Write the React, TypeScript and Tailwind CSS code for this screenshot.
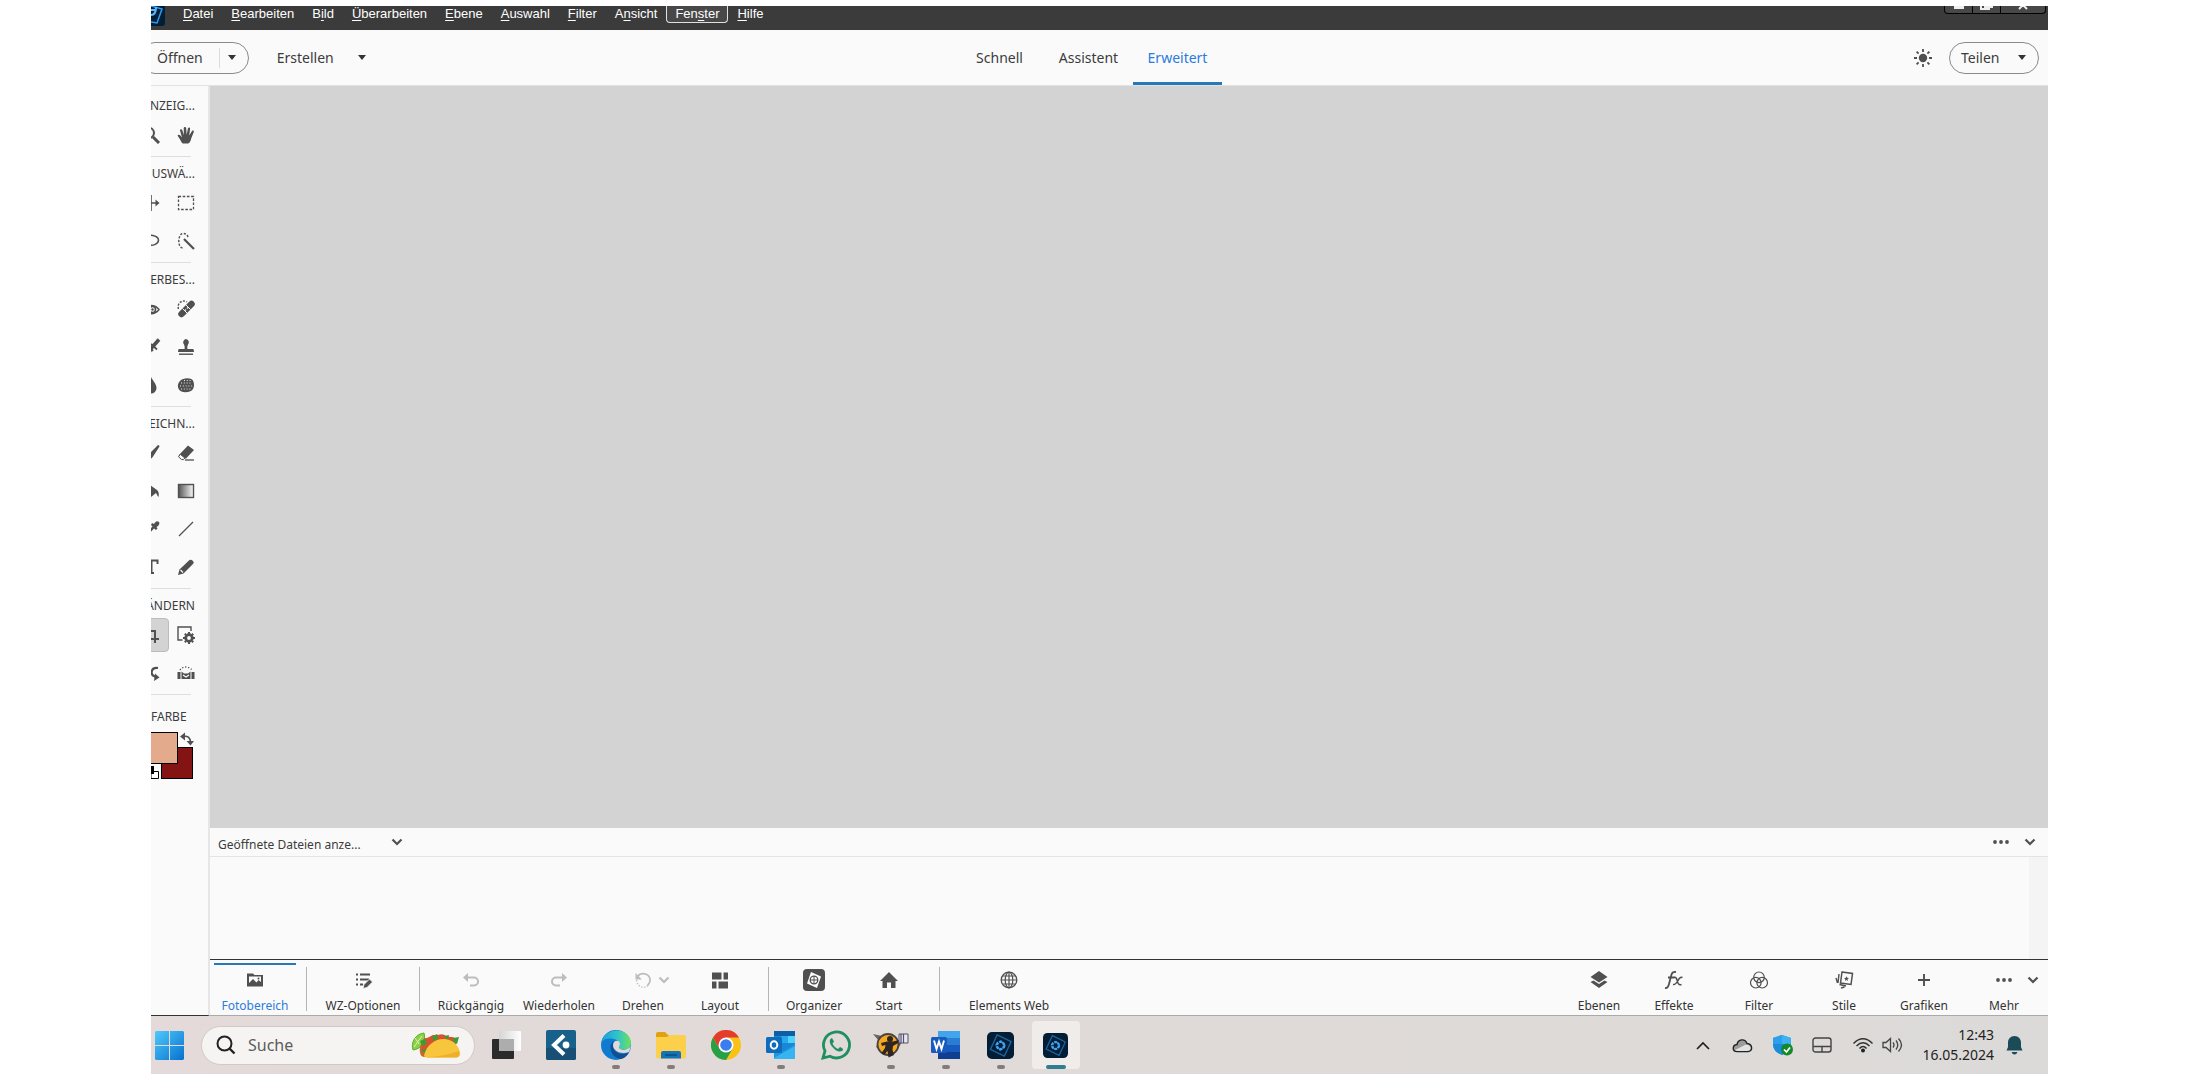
import React from "react";

type Kids = { children: React.ReactNode };

function Icon({ w = 20, h = 20, children }: Kids & { w?: number; h?: number }) {
  return (
    <svg width={w} height={h} viewBox={`0 0 ${w} ${h}`} fill="none" aria-hidden="true" className="block shrink-0">
      {children}
    </svg>
  );
}

const INK = "#505050";

/* ---------- menu bar ---------- */

const menus: [string, string, string][] = [
  ["", "D", "atei"],
  ["", "B", "earbeiten"],
  ["B", "i", "ld"],
  ["", "Ü", "berarbeiten"],
  ["", "E", "bene"],
  ["", "A", "uswahl"],
  ["", "F", "ilter"],
  ["A", "n", "sicht"],
  ["Fen", "s", "ter"],
  ["", "H", "ilfe"],
];

function MenuBar() {
  return (
    <header className="flex h-6 shrink-0 items-start justify-between overflow-hidden bg-[#3b3b3b] pr-0.5">
      <div className="flex items-start">
        <Icon w={14} h={20}>
          <path d="M0 0H14V17Q14 20 11 20H0Z" fill="#021e36" />
          <path d="M0 0L11 3L6 17L0 16" stroke="#2e9bf0" strokeWidth="1.5" />
          <path d="M0 9Q5 9 5 1M0 4H5" stroke="#5bb8ff" strokeWidth="2" />
        </Icon>
        <nav className="ml-[9px] flex">
          {menus.map(([a, u, b]) => (
            <button
              key={a + u + b}
              className={
                a === "Fen"
                  ? "h-[17px] rounded-b-sm border border-t-0 border-[#e0e0e0] bg-[#484848] px-2 text-[13px] leading-4 text-white"
                  : "h-[17px] border border-t-0 border-transparent px-2 text-[13px] leading-4 text-white"
              }
            >
              {a}
              <span className="underline underline-offset-2">{u}</span>
              {b}
            </button>
          ))}
        </nav>
      </div>
      <div className="flex h-2 overflow-hidden rounded-b-sm border border-t-0 border-black bg-[#484848]">
        <button aria-label="Minimieren" className="flex w-7 justify-center border-r border-black">
          <Icon w={10} h={4}><path d="M0 0H10V3H0Z" fill="#eee" /></Icon>
        </button>
        <button aria-label="Wiederherstellen" className="flex w-7 justify-center border-r border-black">
          <Icon w={14} h={5}><path d="M1 0V3H9V0M5 0V1H12V0" stroke="#eee" strokeWidth="2" /></Icon>
        </button>
        <button aria-label="Schließen" className="flex w-11 justify-center">
          <Icon w={12} h={4}><path d="M2 3L5 0H7L10 3" stroke="#eee" strokeWidth="2" /></Icon>
        </button>
      </div>
    </header>
  );
}

/* ---------- mode bar ---------- */

function Caret() {
  return <Icon w={8} h={5}><path d="M0 0H8L4 5Z" fill="#333" /></Icon>;
}

function ModeBar() {
  return (
    <div className="grid h-14 shrink-0 grid-cols-[1fr_auto_1fr] overflow-hidden border-b border-[#e2e2e2] bg-[#fafafa] text-[14px] text-[#3c3c3c]">
      <div className="flex items-center">
        <div className="-ml-3 flex h-8 items-center rounded-full border border-[#8a8a8a] pl-[17px] pr-3">
          <button className="pr-4">Öffnen</button>
          <button aria-label="Öffnen Optionen" className="flex h-5 items-center border-l border-[#dcdcdc] pl-2"><Caret /></button>
        </div>
        <button className="ml-7 flex items-center gap-6">
          Erstellen
          <Caret />
        </button>
      </div>
      <div className="mr-[22px] flex">
        <button className="w-[89px]">Schnell</button>
        <button className="w-[89px]">Assistent</button>
        <button className="w-[89px] border-b-3 border-[#2878b8] pt-[3px] text-[#2c7be0]">Erweitert</button>
      </div>
      <div className="flex items-center justify-end pr-[9px]">
        <button aria-label="Helligkeit" className="mr-4">
          <Icon>
            <circle cx="10" cy="10" r="4.2" fill={INK} />
            <path d="M10 1V4M10 16V19M1 10H4M16 10H19M3.6 3.6L5.6 5.6M14.4 14.4L16.4 16.4M16.4 3.6L14.4 5.6M5.6 14.4L3.6 16.4" stroke={INK} strokeWidth="1.8" />
          </Icon>
        </button>
        <button className="flex h-8 w-[90px] items-center justify-between rounded-full border border-[#8a8a8a] pl-[11px] pr-3">
          Teilen
          <Caret />
        </button>
      </div>
    </div>
  );
}

/* ---------- tool column ---------- */

const tools: Record<string, React.ReactNode> = {
  Zoom: <><circle cx="6" cy="7" r="5" stroke={INK} strokeWidth="2" /><path d="M10 11L16 17" stroke={INK} strokeWidth="3" /></>,
  Hand: <path d="M5 17C3.500 14 2 12 0.500 9.500C1 8.300 2.800 8.500 3.800 10L5 11.500L3 4.500C3 3 4.900 2.900 5.400 4.400L6.900 9L6.700 2C7 0.500 9 0.500 9.200 2L9.600 8.800L11 2.300C11.500 1 13.200 1.300 13.100 2.800L12.200 9.500L15 5C15.800 4 17.300 4.800 16.800 6L14.200 12.500C13.700 15 12.700 17 11.200 17.500H6Z" fill={INK} />,
  Verschieben: <><path d="M8 1V17M1 9H15" stroke={INK} strokeWidth="1.600" /><path d="M12.500 5.500L16.500 9L12.500 12.500Z" fill={INK} /></>,
  Auswahlrechteck: <rect x="1.500" y="2.500" width="15" height="13" stroke={INK} strokeWidth="1.300" strokeDasharray="2.600 1.600" />,
  Lasso: <path d="M2 5C5 2 15 3 15.500 8C15.500 12 10 14 6 13" stroke={INK} strokeWidth="1.500" />,
  Schnellauswahl: <><path d="M5.500 16C0 15 1 1.500 6 1.500C10 1.500 11 4 11 6" stroke={INK} strokeWidth="1.400" strokeDasharray="2.200 1.500" /><path d="M7 7L17 17" stroke={INK} strokeWidth="2.200" /></>,
  Auge: <><path d="M0 9.500C4 4 12 4 16 9.500C12 15 4 15 0 9.500Z" stroke={INK} strokeWidth="1.500" /><circle cx="9.500" cy="9.500" r="3" stroke={INK} strokeWidth="1.600" /><circle cx="9.500" cy="9.500" r="1.200" fill={INK} /></>,
  Reparatur: <><path d="M1.500 9C-0.500 3 6-1 10 2" stroke={INK} strokeWidth="1.400" strokeDasharray="2 1.400" /><path d="M4.500 14L14.500 4" stroke={INK} strokeWidth="6.500" strokeLinecap="round" /><path d="M5.500 8.500L10 13M9 5L13.500 9.500" stroke="#fafafa" strokeWidth="1" /><circle cx="8.500" cy="10" r=".8" fill="#fafafa" /><circle cx="10.500" cy="8" r=".8" fill="#fafafa" /></>,
  Smartpinsel: <><path d="M16 1.500L8.500 10L5 16" stroke={INK} strokeWidth="3.600" /><path d="M8 6L14 11.500M10 13L6 8" stroke={INK} strokeWidth="1.800" /></>,
  Stempel: <><path d="M9 1A3.300 3.300 0 0 1 11 6.500Q10 8 10.400 11H16Q17 11 17 14H1Q1 11 2 11H7.600Q8 8 7 6.500A3.300 3.300 0 0 1 9 1Z" fill={INK} /><path d="M2 16.200H16" stroke={INK} strokeWidth="1.400" /></>,
  Weichzeichner: <path d="M8 1C10 5 13.500 8 13.500 12A5.500 5.500 0 0 1 2.500 12C2.500 8 6 5 8 1Z" fill={INK} />,
  Schwamm: <><path d="M3 5C6 1.500 14 1.500 16 4.500C18 9 17 13 14 15C9 17 4 16.500 2 13.500C0 10 1 7 3 5Z" fill={INK} /><path d="M4 7H14M3 10H16M4 13H14M7 4.500H14" stroke="#fafafa" strokeWidth=".9" strokeDasharray="1 1.800" /></>,
  Pinsel: <path d="M15 1Q16.500 1 16.500 2.500L11 11Q9 15.500 3 16.500Q5 14.500 7 9Z" fill={INK} />,
  Radiergummi: <><path d="M11 1.500L17 6L9 14.500H5L1.500 11.500Z" fill={INK} /><path d="M3.300 10.300L7.800 14L6.500 15.600H4.600L1.500 12.800Z" fill="#fafafa" stroke={INK} strokeWidth="1" /><path d="M8 16H17" stroke={INK} strokeWidth="1.300" /></>,
  Füllwerkzeug: <path d="M7 3L14 8C16 10 16 12 15.500 15C14 14 14 12 13 11L8 15L2 9Z" fill={INK} />,
  Verlauf: <><defs><linearGradient id="ramp"><stop stopColor="#555" /><stop offset="1" stopColor="#fafafa" /></linearGradient></defs><rect x="1.500" y="2.500" width="15" height="13" fill="url(#ramp)" stroke={INK} strokeWidth="1.400" /></>,
  Pipette: <path d="M16 2C14 0 12 2 11 4L9 3L8 5L9.500 6.500L3 13V15H5L11 8.500L13 10L14.500 8.500L13.500 7C16 6 17 3.500 16 2Z" fill={INK} />,
  Linie: <path d="M2 16L16 2" stroke={INK} strokeWidth="1.300" />,
  Text: <path d="M2 6V2.500H14.500V6M8.500 2.500V15M6 15H11" stroke={INK} strokeWidth="2" />,
  Buntstift: <><path d="M1 17L2.500 11.500L12.500 2Q14 1 16 3Q17.500 4.500 16 6L6.500 15.500Z" fill={INK} /><path d="M3.500 12L6 14.500" stroke="#fafafa" strokeWidth="1.200" /></>,
  Freistellen: <path d="M5 1V13H16M1 5H12V17" stroke={INK} strokeWidth="2" />,
  "Neu zusammensetzen": <><path d="M14 5V1H1V14H5.500" stroke={INK} strokeWidth="1.400" /><circle cx="12" cy="12" r="3.300" stroke={INK} strokeWidth="2.800" /><path d="M12 6V8M12 16V18M6 12H8M16 12H18M7.800 7.800L9 9M15 15L16.200 16.200M16.200 7.800L15 9M9 15L7.800 16.200" stroke={INK} strokeWidth="2" /></>,
  Inhaltsbewusst: <><path d="M15 4C8 3 6 11 13 13" stroke={INK} strokeWidth="2.200" /><path d="M11 17L16.500 13.500L12 9.500Z" fill={INK} /></>,
  Ausrichten: <><path d="M0.500 8H3.500V15H0.500ZM14.500 8H17.500V15H14.500Z" fill={INK} /><path d="M4.500 7.500L7 9.500H11L13.500 7.500V15H4.500Z" fill={INK} /><path d="M6 11L9 13L12 11" stroke="#fafafa" strokeWidth="1.200" /><path d="M3 6C6 2 12 2 15 6" stroke={INK} strokeWidth="1.300" strokeDasharray="1.200 1.800" /></>,
};

const sections: { title: string; items: string[] }[] = [
  { title: "NZEIG...", items: ["Zoom", "Hand"] },
  { title: "USWÄ...", items: ["Verschieben", "Auswahlrechteck", "Lasso", "Schnellauswahl"] },
  { title: "ERBES...", items: ["Auge", "Reparatur", "Smartpinsel", "Stempel", "Weichzeichner", "Schwamm"] },
  { title: "EICHN...", items: ["Pinsel", "Radiergummi", "Füllwerkzeug", "Verlauf", "Pipette", "Linie", "Text", "Buntstift"] },
  { title: "ÄNDERN", items: ["Freistellen", "Neu zusammensetzen", "Inhaltsbewusst", "Ausrichten"] },
];

function ToolColumn() {
  return (
    <aside className="w-[59px] shrink-0 overflow-hidden border-r-2 border-b border-r-[#e6e6e6] border-b-[#333] bg-[#fafafa] pt-[3px] text-[#3c3c3c]">
      {sections.map((s) => (
        <section key={s.title}>
          <h2 className="flex h-[27px] justify-end pt-2 pr-[13px] text-[12px] leading-[18px]">{s.title}</h2>
          <div className="-ml-4 grid w-[68px] grid-cols-2">
            {s.items.map((t) => (
              <div key={t} className="flex h-[38px] items-center">
                <button
                  aria-label={t}
                  className={
                    t === "Freistellen"
                      ? "flex h-[34px] w-[34px] items-center justify-center rounded-sm border border-[#bcbcbc] bg-[#d3d3d3]"
                      : "flex h-[34px] w-[34px] items-center justify-center"
                  }
                >
                  <Icon w={18} h={18}>{tools[t]}</Icon>
                </button>
              </div>
            ))}
          </div>
          <div className="mt-0.5 mr-[17px] h-px bg-[#dedede]" />
        </section>
      ))}
      <h2 className="pt-[13px] text-[12px] leading-[18px]">FARBE</h2>
      <div className="relative mt-1.5 h-12">
        <button aria-label="Hintergrundfarbe" className="absolute top-[15px] left-[10px] size-8 border border-black bg-[#841414]" />
        <button aria-label="Vordergrundfarbe" className="absolute top-0 -left-1 h-8 w-[31px] border border-black bg-[#e3aa8c]" />
        <button aria-label="Farben tauschen" className="absolute top-0 left-[29px]">
          <Icon w={14} h={14}>
            <path d="M3 4.500Q10 3 10.500 10" stroke={INK} strokeWidth="1.600" />
            <path d="M0 4.500L5 0.500V8.500ZM6.500 9H14L10.500 13.500Z" fill={INK} />
          </Icon>
        </button>
        <button aria-label="Standardfarben" className="absolute top-[34px] left-0">
          <Icon w={9} h={14}>
            <path d="M1.500 5.500H7.500V12.500H0V5.500" fill="#fff" stroke="#000" />
            <path d="M0 0H3V8H0Z" fill="#000" />
          </Icon>
        </button>
      </div>
    </aside>
  );
}

/* ---------- photo bin ---------- */

function Chevron({ color = INK }: { color?: string }) {
  return <Icon w={12} h={8}><path d="M1.500 1.500L6 6L10.500 1.500" stroke={color} strokeWidth="2.200" /></Icon>;
}

function Dots() {
  return (
    <Icon w={18} h={6}>
      <circle cx="3" cy="3" r="1.900" fill={INK} />
      <circle cx="9" cy="3" r="1.900" fill={INK} />
      <circle cx="15" cy="3" r="1.900" fill={INK} />
    </Icon>
  );
}

function PhotoBin() {
  return (
    <section className="shrink-0 bg-[#fafafa]">
      <div className="flex h-[29px] items-center justify-between border-b border-[#e4e4e4] pr-3 pl-2">
        <label className="relative flex w-[187px] items-center">
          <span className="sr-only">Fotobereich Anzeige</span>
          <select className="w-full appearance-none bg-transparent pt-1.5 text-[12px] leading-[18px] text-[#3c3c3c]">
            <option>Geöffnete Dateien anze...</option>
          </select>
          <span className="pointer-events-none absolute right-0.5"><Chevron /></span>
        </label>
        <div className="flex items-center gap-3.5">
          <button aria-label="Weitere Optionen"><Dots /></button>
          <button aria-label="Fotobereich schließen"><Chevron /></button>
        </div>
      </div>
      <div className="flex h-[102px] justify-end">
        <div className="w-[19px] bg-[#f4f4f4]" />
      </div>
    </section>
  );
}

/* ---------- action bar ---------- */

const GREY = "#bdbdbd";

const art: Record<string, React.ReactNode> = {
  Fotobereich: <><path d="M2 3.500H8L9.500 5H18V16.500H2Z" fill={INK} /><path d="M4 6.500H16V12L13.500 10L11.500 12.500L8 9L4 13Z" fill="#fafafa" /><circle cx="13.500" cy="8.500" r="1" fill={INK} /></>,
  "WZ-Optionen": <><path d="M3 4.500H5M7 4.500H17M3 9.500H5M7 9.500H16M3 14.500H5M7 14.500H10" stroke={INK} strokeWidth="2" /><path d="M10 18.500L11 14.500L16.500 9L19.500 12L14 17.500Z" fill={INK} stroke="#fafafa" strokeWidth=".8" /></>,
  Rückgängig: <><path d="M5 7.500H13A4 4 0 0 1 13 15.500H9" stroke={GREY} strokeWidth="2" /><path d="M2 7.500L7 3V12Z" fill={GREY} /></>,
  Wiederholen: <><path d="M15 7.500H7A4 4 0 0 0 7 15.500H11" stroke={GREY} strokeWidth="2" /><path d="M18 7.500L13 3V12Z" fill={GREY} /></>,
  Drehen: <><path d="M4.500 6.500C8 2 16 3 17 9C17.500 12 16 14 14.500 15.500" stroke={GREY} strokeWidth="1.700" /><path d="M3.500 10C4 17 11 19 15 15.500" stroke={GREY} strokeWidth="1.400" strokeDasharray="1.300 1.600" /><path d="M2.500 3V9.500H9Z" fill={GREY} /></>,
  Layout: <path d="M2 2.500H11.500V9.500H2ZM13.500 2.500H18V9.500H13.500ZM2 11.500H6.500V18.500H2ZM8.500 11.500H18V18.500H8.500Z" fill={INK} />,
  Start: <path d="M10 2L19 11H16.500V18H12V12.500H8V18H3.500V11H1Z" fill={INK} />,
  "Elements Web": <><circle cx="10" cy="10" r="7.800" stroke={INK} strokeWidth="1.300" /><ellipse cx="10" cy="10" rx="3.800" ry="7.800" stroke={INK} strokeWidth="1.200" /><path d="M10 2V18M2 10H18M3.500 6H16.500M3.500 14H16.500" stroke={INK} strokeWidth="1.200" /></>,
  Ebenen: <><path d="M10 1L18.500 7L10 12.500L1.500 7Z" fill={INK} /><path d="M1.500 12L4.500 10.500L10 14L15.500 10.500L18.500 12L10 18Z" fill={INK} /></>,
  Effekte: <><path d="M1 18Q4 18.500 5 14L7.500 4.500Q8.500 1.500 12 2M4 7.500H10.500" stroke={INK} strokeWidth="1.800" /><path d="M10 7.500Q12 6.500 13 10L14 13Q15 15.500 17.500 14.500M18.500 7.500Q16 6.500 14 10.500Q11.500 15 9 14.500" stroke={INK} strokeWidth="1.500" /></>,
  Filter: <><circle cx="10" cy="7.300" r="5.300" stroke={INK} strokeWidth="1.200" /><circle cx="6.800" cy="12.700" r="5.300" stroke={INK} strokeWidth="1.200" /><circle cx="13.200" cy="12.700" r="5.300" stroke={INK} strokeWidth="1.200" /></>,
  Stile: <><path d="M8 2L18.500 3.500L17 14.500L6.500 13Z" stroke={INK} strokeWidth="1.500" /><path d="M12.500 6L13.200 7.700L15 8L13.500 9.200L14 11L12.500 10L11 11L11.300 9.200L10 8L12 7.700Z" fill={INK} /><path d="M5 4L4 13M2 8L3.500 13M5.500 14.500L12 16M7 18L10.500 17" stroke={INK} strokeWidth="1.400" /></>,
  Grafiken: <path d="M10 4V16M4 10H16" stroke={INK} strokeWidth="1.900" />,
};

function Action({ label, className, active = false }: { label: string; className: string; active?: boolean }) {
  return (
    <button className={`flex h-full flex-col items-center justify-between border-t-2 ${active ? "border-[#2878b8] text-[#2c7be0]" : "border-transparent text-[#333]"} ${className}`}>
      <span className="flex h-[30px] items-center">
        {label === "Organizer" ? (
          <Icon w={22} h={22}>
            <rect width="22" height="22" rx="4" fill={INK} />
            <path d="M8 3L18 7.500L14 19L4 14.500Z" fill="#fff" />
            <circle cx="11" cy="11" r="3.800" stroke={INK} strokeWidth="1.300" />
            <path d="M11 7V15M7 11H15" stroke={INK} />
          </Icon>
        ) : label === "Mehr" ? (
          <Dots />
        ) : (
          <Icon>{art[label]}</Icon>
        )}
      </span>
      <span className="text-[12px] leading-[18px] whitespace-nowrap">{label}</span>
    </button>
  );
}

function Rule() {
  return <div className="mt-1 h-11 w-px shrink-0 bg-[#b5b5b5]" />;
}

function ActionBar() {
  return (
    <nav className="flex h-[57px] shrink-0 items-start justify-between border-t border-b border-t-[#333] border-b-[#aaa] bg-[#fafafa] pt-[3px]">
      <div className="flex h-full">
        <Action label="Fotobereich" className="mr-[10px] ml-1 w-[82px]" active />
        <Rule />
        <Action label="WZ-Optionen" className="w-28" />
        <Rule />
        <Action label="Rückgängig" className="w-[102px]" />
        <Action label="Wiederholen" className="w-[74px]" />
        <div className="relative">
          <Action label="Drehen" className="w-[94px]" />
          <span className="pointer-events-none absolute top-[13px] left-[62px]"><Chevron color={GREY} /></span>
        </div>
        <Action label="Layout" className="mr-[18px] w-[60px]" />
        <Rule />
        <Action label="Organizer" className="w-[90px]" />
        <Action label="Start" className="mr-5 w-[60px]" />
        <Rule />
        <Action label="Elements Web" className="w-[138px]" />
      </div>
      <div className="relative flex h-full pr-1">
        <Action label="Ebenen" className="w-[70px]" />
        <Action label="Effekte" className="w-20" />
        <Action label="Filter" className="w-[90px]" />
        <Action label="Stile" className="w-20" />
        <Action label="Grafiken" className="w-20" />
        <Action label="Mehr" className="w-20" />
        <span className="pointer-events-none absolute top-[13px] right-[9px]"><Chevron /></span>
      </div>
    </nav>
  );
}

/* ---------- taskbar ---------- */

function Elements({ size }: { size: number }) {
  return (
    <svg width={size} height={size} viewBox="0 0 28 28" fill="none" aria-hidden="true">
      <rect width="28" height="28" rx="5" fill="#021e36" />
      <path d="M10.500 3L25 10L18 25L3.500 18Z" stroke="#1f639c" strokeWidth="1.400" />
      <circle cx="14" cy="14" r="3.800" stroke="#3fa3f5" strokeWidth="2.600" strokeDasharray="3 1" />
      <path d="M14 9L17 12M19 14L16 17M14 19L11 16M9 14L11 11" stroke="#3fa3f5" strokeWidth="1.200" />
    </svg>
  );
}

const apps: { name: string; running?: boolean; active?: boolean; icon: React.ReactNode }[] = [
  { name: "Aktive Anwendungen", icon: <Icon w={30} h={30}><defs><linearGradient id="tv" x2="1"><stop stopColor="#d5d5d5" /><stop offset="1" stopColor="#fff" /></linearGradient></defs><rect x="1" y="9" width="22" height="20" rx="1" fill="#2b2b2b" /><rect x="8" y="1" width="22" height="20" rx="1" fill="url(#tv)" /><path d="M8 9H23V21H8Z" fill="#adadad" /></Icon> },
  { name: "Cubasis", icon: <Icon w={30} h={30}><rect width="30" height="30" rx="2" fill="#17618a" /><path d="M0 18H30V28Q30 30 28 30H2Q0 30 0 28Z" fill="#184f74" /><path d="M18 5.500L8 15L18 24.500" stroke="#fff" strokeWidth="4" /><circle cx="20" cy="15" r="3.400" fill="#fff" /></Icon> },
  { name: "Edge", running: true, icon: <Icon w={30} h={30}><defs><linearGradient id="e1"><stop stopColor="#1b9de2" /><stop offset=".55" stopColor="#31c5c9" /><stop offset="1" stopColor="#6be25a" /></linearGradient></defs><circle cx="15" cy="15" r="15" fill="#0f7bd0" /><path d="M0.500 12C3-3 29-4 30 13C30 20 21 21 18 18C17.500 17 19 16 19 14C18 8 5 6 0.500 12Z" fill="url(#e1)" /><path d="M13 11C6 15 10 28 20 29C24 28 27 25 28 22C20 27 11 22 12 14Z" fill="#124f91" /><path d="M12 15C12 10 19 9 19 14C19 16 17.500 17 18 18C21 21 27 20 30 16L28 22C20 25 12 21 12 15Z" fill="#dfd9d8" /></Icon> },
  { name: "Explorer", running: true, icon: <Icon w={30} h={30}><path d="M0 4Q0 2 2 2H9L12 5H28V10H0Z" fill="#e0a112" /><path d="M0 7H11L13 5H28Q30 5 30 7V26Q30 28.500 28 28.500H2Q0 28.500 0 26Z" fill="#fcd04b" /><path d="M5 28.500V23Q5 21 7 21H23Q25 21 25 23V28.500Z" fill="#1273b8" /><path d="M9 25H21" stroke="#0b4b80" strokeWidth="1.500" /></Icon> },
  { name: "Chrome", icon: <Icon w={30} h={30}><circle cx="15" cy="15" r="15" fill="#fbc116" /><path d="M15 15L2 7.500A15 15 0 0 1 28 7.500H15Z" fill="#e33b2e" /><path d="M2 7.500A15 15 0 0 0 15 30L21.500 18.800L15 22L8.500 18.800Z" fill="#27a048" /><path d="M2 7.500L8.500 18.800L15 7.500H28" fill="#e33b2e" /><circle cx="15" cy="15" r="7.500" fill="#fff" /><circle cx="15" cy="15" r="5.800" fill="#3b7ded" /></Icon> },
  { name: "Outlook", running: true, icon: <Icon w={30} h={30}><rect x="8" y="1" width="21" height="28" rx="1.500" fill="#1a86d6" /><path d="M8 1H29V6H8Z" fill="#0b5ea8" /><path d="M15 6H22V13H15Z" fill="#28a8ea" /><path d="M22 6H29V13H22Z" fill="#50d2ff" /><path d="M8 16L18 21L29 14V28H8Z" fill="#1f95e0" /><path d="M8 28L29 16V29H8Z" fill="#35b4f0" /><rect y="7" width="16" height="16" rx="1.500" fill="#0f6cbd" /><ellipse cx="8" cy="15" rx="3.300" ry="3.800" stroke="#fff" strokeWidth="2" /></Icon> },
  { name: "WhatsApp", icon: <Icon w={30} h={30}><path d="M2 28L4 21A13 13 0 1 1 9 26.200Z" stroke="#1f8f5f" strokeWidth="2.800" /><path d="M11 8C8 9 8 13 11 16.500C14 20.500 18 22.500 21 21C23 19.500 22 18.500 19 17L17 19C14.500 18 12.500 16 11.500 13.500L13 11.500Z" fill="#1f8f5f" /></Icon> },
  { name: "Biet-O-Matic", running: true, icon: <Icon w={36} h={30}><path d="M0 4L9 6L8 20L3 17L6 11Z" fill="#666" /><path d="M29 12L24 20L20 24L22 9Z" fill="#555" /><circle cx="15" cy="14.500" r="10.500" fill="#f7a81d" stroke="#444" strokeWidth="1.800" /><circle cx="17" cy="9" r="3" fill="#2d2622" /><path d="M8 13L14 11.500H20L26 10V12.500L20 16L19.500 20L21 25L15.500 27.500L14.500 21L11 25L8.500 23L12 18L12.500 15L9 16Z" fill="#2d2622" /><path d="M26 4H35V13H26Z" fill="#e8e6ee" stroke="#53506b" /><path d="M30.500 4V13M28 4V13" stroke="#53506b" strokeWidth="1.200" /></Icon> },
  { name: "Word", running: true, icon: <Icon w={30} h={30}><rect x="7" y="1" width="22" height="28" rx="1.500" fill="#2b7cd3" /><path d="M7 1H29V8H7Z" fill="#41a5ee" /><path d="M7 15H29V22H7Z" fill="#185abd" /><path d="M7 22H29V29H7Z" fill="#103f91" /><rect y="7" width="16" height="16" rx="1.500" fill="#185abd" /><path d="M3 10.500L5.500 19L8 11.500L10.500 19L13 10.500" stroke="#fff" strokeWidth="1.900" /></Icon> },
  { name: "Elements Organizer", running: true, icon: <Elements size={27} /> },
  { name: "Photoshop Elements", running: true, active: true, icon: <Elements size={25} /> },
];

function Taco() {
  return (
    <Icon w={50} h={26}>
      <path d="M14 1A13 13 0 0 0 3 18A13 13 0 0 0 14 1Z" fill="#8bd04a" stroke="#5cae2c" />
      <path d="M12 4L4 15M5 6L9 12" stroke="#d8f3a8" />
      <path d="M10 20C8 8 22 1 32 3L43 6L20 24C14 26 10 25 10 20Z" fill="#c9662b" />
      <path d="M12 10Q14 4 19 7Q22 1 27 4Q33 0 37 5Q42 4 47 7L46 12L18 16L12 18Z" fill="#d9522f" />
      <path d="M10 9L15 7L17 12L12 14ZM22 5L27 2L28 7L24 9ZM34 4L39 3L38 8ZM43 6L49 5L47 12L43 10ZM11 18L17 17L16 22Z" fill="#3f9a34" />
      <path d="M14 24C16 12 27 6 35 7C45 8 50 16 50 22Q50 25 46 25.500H20Q15 26 14 24Z" fill="#f8c63d" />
      <path d="M15 25Q32 25 49 19Q51 25 46 25.500H18Z" fill="#eeb02a" />
    </Icon>
  );
}

function Taskbar() {
  return (
    <footer className="flex h-[58px] shrink-0 items-center justify-between bg-linear-to-r from-[#e3dad9] to-[#dcdad8] text-[#222]">
      <div className="flex h-full items-center">
        <button aria-label="Start" className="ml-1">
          <Icon w={29} h={29}>
            <defs><linearGradient id="win" x2="1" y2="1"><stop stopColor="#4fc9fb" /><stop offset="1" stopColor="#0671cf" /></linearGradient></defs>
            <path d="M1 0H14V14H0V1ZM15 0H28L29 1V14H15ZM0 15H14V29H1L0 28ZM15 15H29V28L28 29H15Z" fill="url(#win)" />
          </Icon>
        </button>
        <label className="ml-[17px] flex h-[39px] w-[274px] items-center rounded-full border border-[#d2c9c7] bg-[#f6f4f3] pr-3.5 pl-3.5">
          <Icon>
            <circle cx="8.500" cy="8.500" r="7" stroke="#222" strokeWidth="2" />
            <path d="M13.500 13.500L18.500 18.500" stroke="#222" strokeWidth="2.400" />
          </Icon>
          <span className="sr-only">Suche</span>
          <input type="text" placeholder="Suche" className="ml-3 w-0 flex-1 bg-transparent text-[16px] leading-6 text-[#555] outline-none placeholder:text-[#5c5c5c]" />
          <Taco />
        </label>
        <div className="ml-[3px] flex h-full">
          {apps.map((a) => (
            <button key={a.name} aria-label={a.name} className="flex h-full w-[55px] items-center justify-center">
              <span className={a.active ? "relative flex h-12 w-12 items-center justify-center rounded-sm bg-[#f0ecea]" : "relative flex h-12 w-12 items-center justify-center"}>
                {a.icon}
                {a.running && (
                  <span className={a.active ? "absolute bottom-0 h-1 w-5 rounded-full bg-[#2f7f93]" : "absolute bottom-0 h-1 w-2 rounded-full bg-[#827d7b]"} />
                )}
              </span>
            </button>
          ))}
        </div>
      </div>
      <div className="flex items-center pr-[25px]">
        <button aria-label="Ausgeblendete Symbole" className="mr-[22px]"><Icon w={14} h={9}><path d="M1 8L7 2L13 8" stroke="#222" strokeWidth="1.700" /></Icon></button>
        <button aria-label="OneDrive" className="mr-[19px]">
          <Icon w={21} h={15}><path d="M5 13.500C0 13.500 0 7 5 6.500C6 1 13 0 15 5.500C21 6 21 13.500 16 13.500Z" fill="#9c9c9c" stroke="#222" strokeWidth="1.400" /><path d="M3 12L14 6.500Q19 7 18.500 11Q18 13 15 13H5Z" fill="#e4e2e1" /></Icon>
        </button>
        <button aria-label="Windows-Sicherheit" className="mr-[18px]">
          <Icon w={22} h={22}><path d="M10 1L19 4V10C19 16 15 19 10 21C4 19 1 15 1 10V4Z" fill="#1f87d8" /><path d="M10 1L19 4V10H1V4Z" fill="#3db1f2" /><path d="M10 1V21C4 19 1 15 1 10V4Z" fill="#1b8fe0" opacity=".5" /><circle cx="15" cy="15.500" r="6" fill="#128a2a" /><path d="M12 15.500L14.500 18L18 13.500" stroke="#fff" strokeWidth="1.700" /></Icon>
        </button>
        <button aria-label="Touchpad" className="mr-5"><Icon w={20} h={16}><rect x="1" y="1" width="18" height="14" rx="2.500" stroke="#444" strokeWidth="1.400" /><path d="M1 9.500H19M10 9.500V15" stroke="#444" strokeWidth="1.400" /></Icon></button>
        <button aria-label="WLAN" className="mr-2"><Icon w={22} h={16}><path d="M1.500 6.500Q11-3 20.500 6.500M4.500 9Q11 2.500 17.500 9M7.500 11.500Q11 7.500 14.500 11.500" stroke="#333" strokeWidth="1.500" /><circle cx="11" cy="13.500" r="2" fill="#222" /></Icon></button>
        <button aria-label="Lautstärke" className="mr-[18px]"><Icon w={22} h={16}><path d="M1 5.500H4L8.500 1.500V14.500L4 10.500H1Z" stroke="#444" strokeWidth="1.300" /><path d="M11 5.500Q13 8 11 10.500M14 3.500Q17.500 8 14 12.500M16.500 1.500Q22.500 8 16.500 14.500" stroke="#444" strokeWidth="1.300" /></Icon></button>
        <time className="text-right text-[14px] leading-5 text-[#222]">12:43<br />16.05.2024</time>
        <button aria-label="Benachrichtigungen" className="ml-3"><Icon w={17} h={20}><path d="M8.500 1C12.500 1 15 4 15 7.500V12L16.500 15.500H0.500L2 12V7.500C2 4 4.500 1 8.500 1ZM5.500 17H11.500Q10.500 19.500 8.500 19.500T5.500 17Z" fill="#1b4a58" /></Icon></button>
      </div>
    </footer>
  );
}

export default function App() {
  return (
    <div className="flex min-h-screen flex-col bg-white py-1.5 pr-[152px] pl-[151px] font-['Noto_Sans',sans-serif]">
      <div className="flex grow flex-col">
        <div className="flex flex-col font-['Liberation_Sans',sans-serif]">
          <MenuBar />
        </div>
        <ModeBar />
        <div className="flex grow">
          <ToolColumn />
          <main className="flex min-w-0 grow flex-col">
            <div className="grow bg-[#d3d3d3]" />
            <PhotoBin />
            <ActionBar />
          </main>
        </div>
        <Taskbar />
      </div>
    </div>
  );
}
